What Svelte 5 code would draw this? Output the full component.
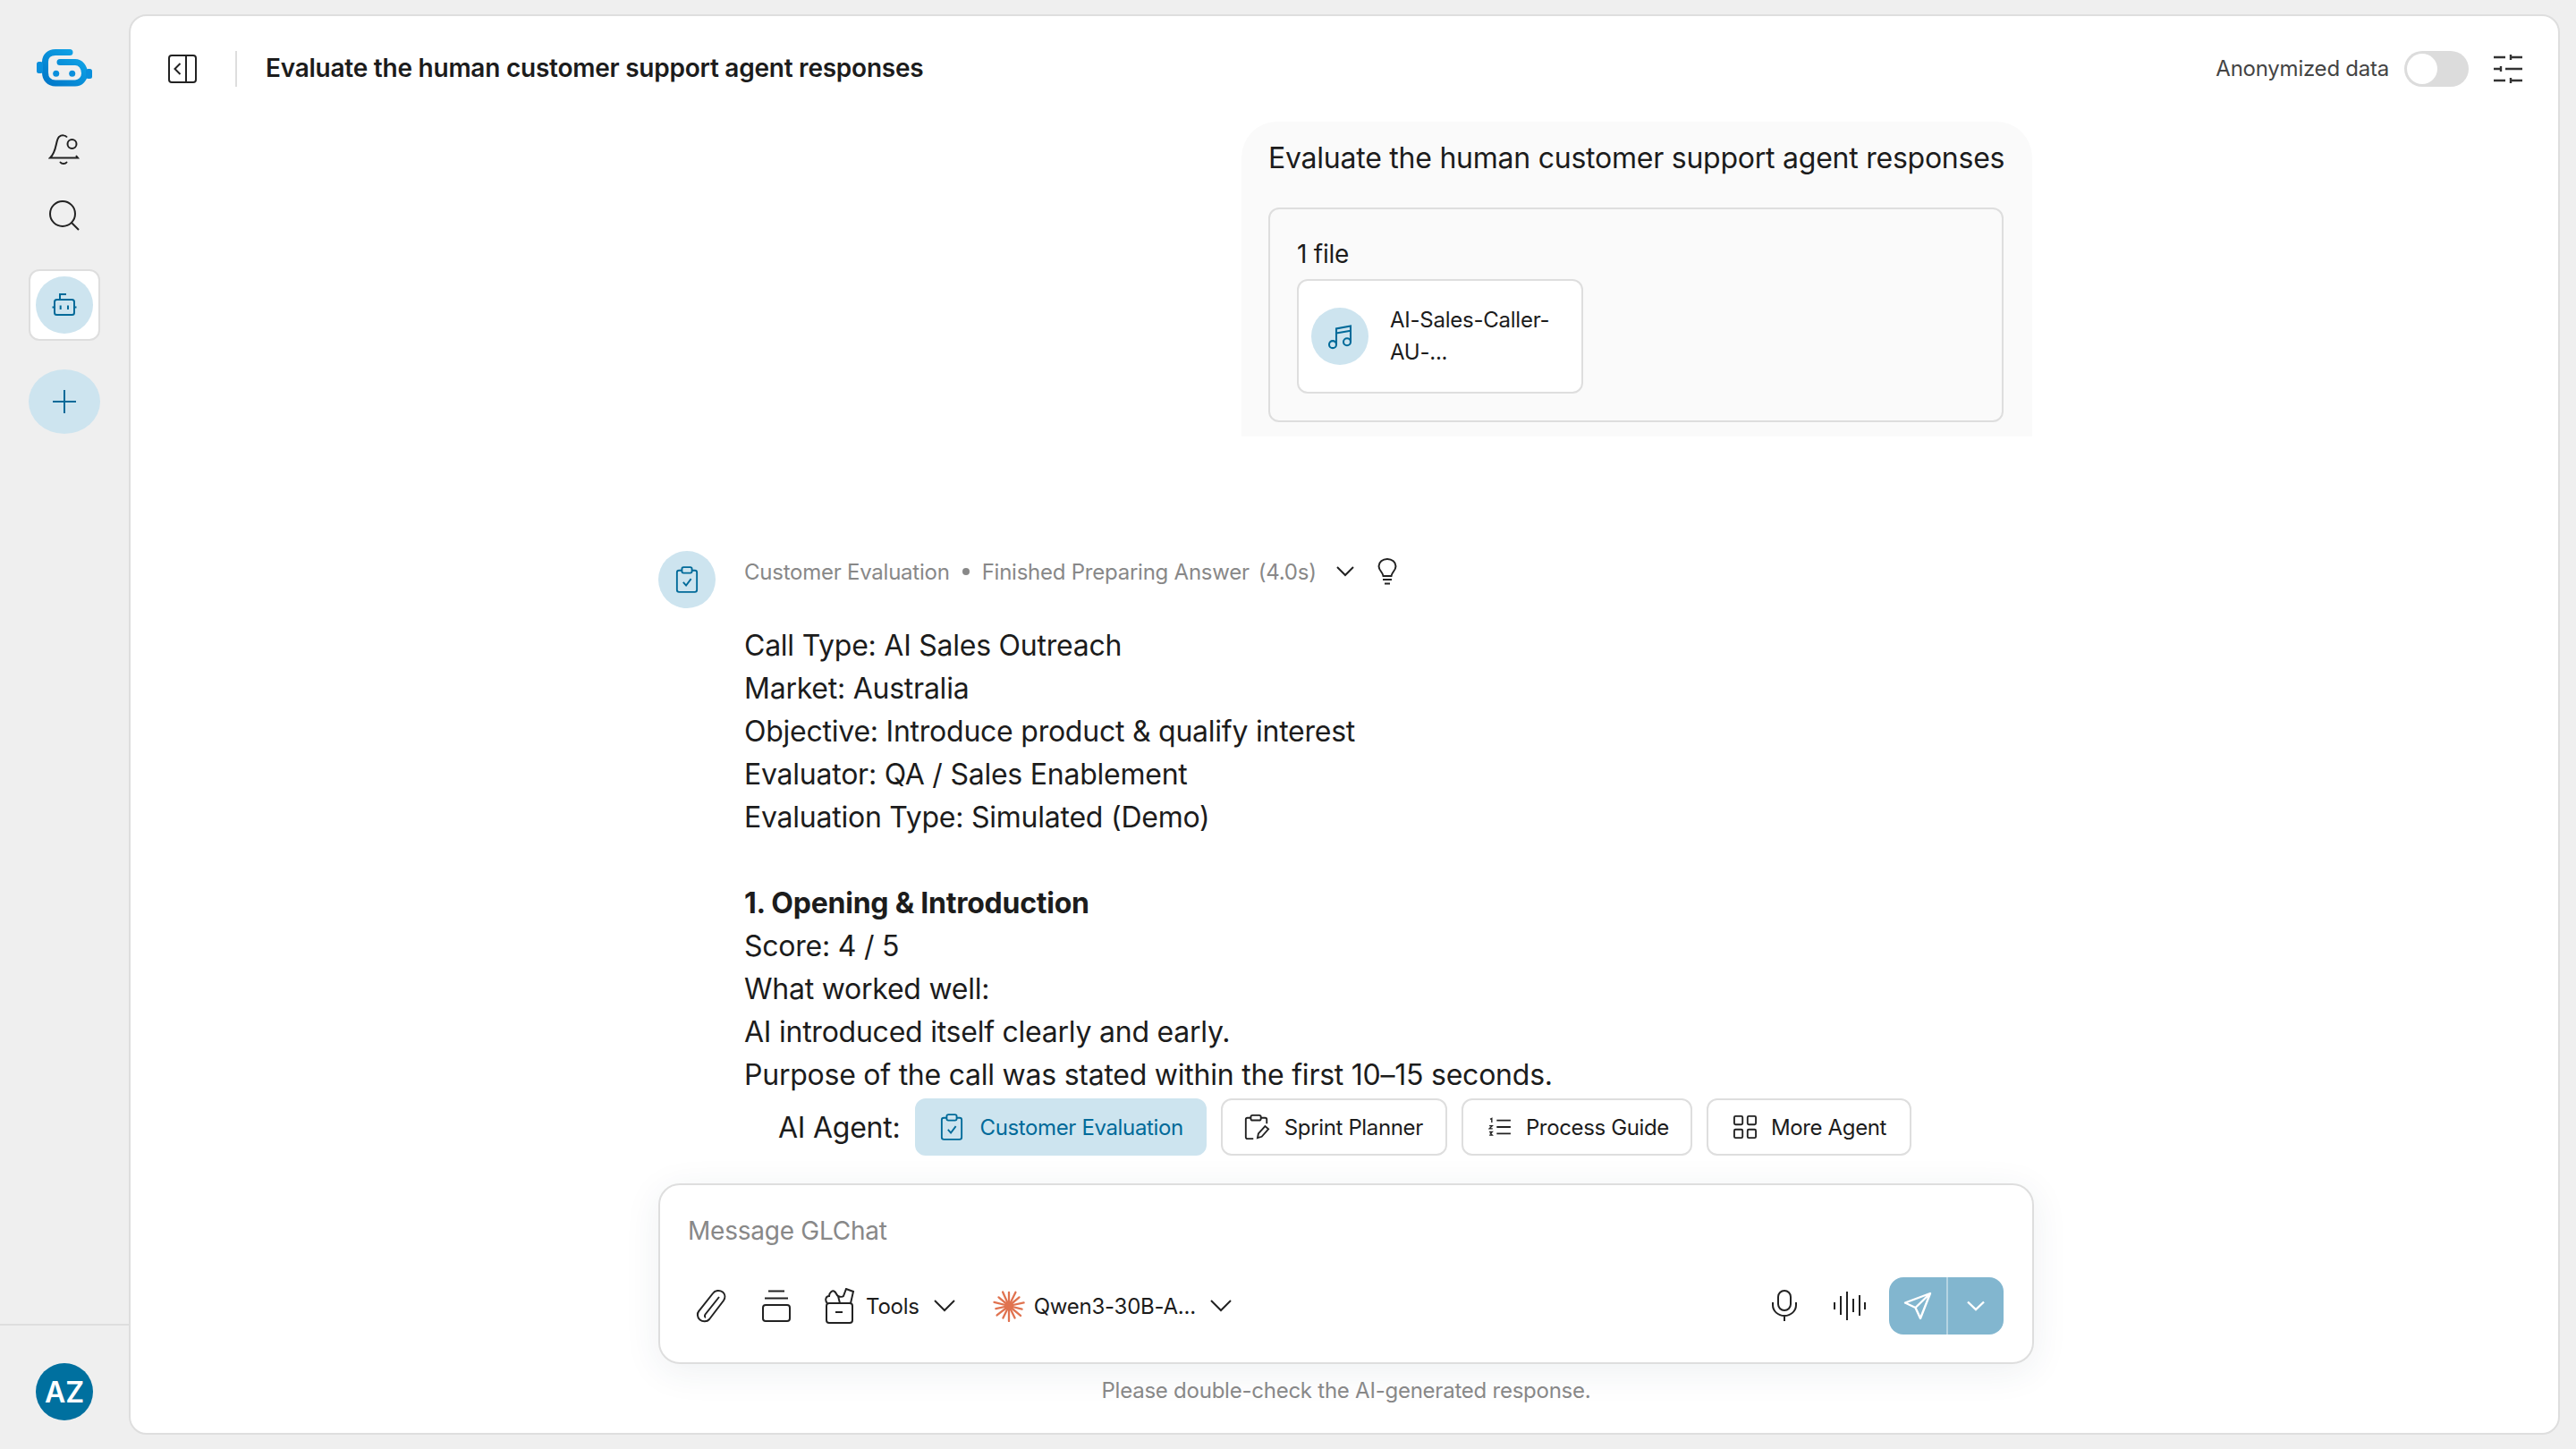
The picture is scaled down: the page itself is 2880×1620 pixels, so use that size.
<script>
  const report = [
    'Call Type: AI Sales Outreach',
    'Market: Australia',
    'Objective: Introduce product & qualify interest',
    'Evaluator: QA / Sales Enablement',
    'Evaluation Type: Simulated (Demo)'
  ];
  const section = [
    'Score: 4 / 5',
    'What worked well:',
    'AI introduced itself clearly and early.',
    'Purpose of the call was stated within the first 10–15 seconds.'
  ];
  const rays = [0, 26, 50, 78, 104, 130, 154, 180, 206, 232, 258, 284, 310, 336];
</script>

<div class="shell">
  <aside class="rail">
    <div class="rail-top">
      <svg class="logo" viewBox="0 0 64 44" fill="none">
        <defs>
          <linearGradient id="lg" x1="0" y1="1" x2="1" y2="0">
            <stop offset="0" stop-color="#0077c8"/>
            <stop offset="1" stop-color="#12a8ea"/>
          </linearGradient>
        </defs>
        <path d="M37 4.500H21C14 4.500 9.500 9 9.500 15V27C9.500 34 14 39 21 39H43C49 39 53.500 34 53.500 28C53.500 21 49 15.500 43 15.500H26" stroke="url(#lg)" stroke-width="7" stroke-linecap="round"/>
        <rect x="0" y="15" width="7" height="13" rx="2.500" fill="#0a8fdc"/>
        <rect x="55" y="23" width="7" height="11" rx="2.500" fill="#0a8fdc"/>
        <circle cx="21.700" cy="28.300" r="3.500" fill="#0a8fdc"/>
        <circle cx="39.700" cy="28.300" r="3.500" fill="#0a8fdc"/>
      </svg>
      <svg class="ic36 bell" viewBox="0 0 36 36" fill="none" stroke="#222" stroke-width="2">
        <path d="M21 4.500C19 2 15 1.500 12 4C8 7.500 10 20 2 27.500H33L31 25"/>
        <circle cx="26.500" cy="12" r="5"/>
        <path d="M13.500 32.500C15 34.500 19 34.500 20.500 32.500" stroke-linecap="round"/>
      </svg>
      <svg class="ic36 search" viewBox="0 0 36 36" fill="none" stroke="#222" stroke-width="2">
        <circle cx="16" cy="16" r="14"/>
        <path d="M26 26L34 34"/>
      </svg>
      <div class="agent-tile">
        <div class="agent-dot">
          <svg viewBox="0 0 32 32" width="32" height="32" fill="none" stroke="#006a99" stroke-width="2">
            <rect x="5" y="10" width="22" height="17" rx="2.500"/>
            <path d="M11 10V4H18M2.500 18.500H5M27 18.500H29.500M11.700 16.500V21M20 16.500V21"/>
          </svg>
        </div>
      </div>
      <div class="plus">
        <svg viewBox="0 0 28 28" width="28" height="28" fill="none" stroke="#006a99" stroke-width="2"><path d="M14 1V27M1 14H27"/></svg>
      </div>
    </div>
    <div class="rail-bottom">
      <div class="avatar">AZ</div>
    </div>
  </aside>

  <main class="panel">
    <header class="top">
      <svg class="ic32" viewBox="0 0 32 32" fill="none" stroke="#222" stroke-width="2">
        <rect x="1" y="1" width="30" height="30" rx="3"/>
        <path d="M20 1V31M13.500 10L7.500 16L13.500 22"/>
      </svg>
      <div class="vr"></div>
      <h1>Evaluate the human customer support agent responses</h1>
      <div class="top-right">
        <span class="anon">Anonymized data</span>
        <div class="toggle"><span></span></div>
        <svg class="ic32" viewBox="0 0 32 32" fill="none" stroke="#333" stroke-width="2.400">
          <path d="M0 3H13M19 3H32M19 0V6M0 16H8M13 16H32M8 13V19M0 29H13M19 29H32M19 26V32"/>
        </svg>
      </div>
    </header>

    <section class="chat">
      <div class="bubble">
        <div class="bubble-text">Evaluate the human customer support agent responses</div>
        <div class="files">
          <div class="files-count">1 file</div>
          <div class="file">
            <div class="file-ic">
              <svg viewBox="0 0 28 28" width="32" height="32" fill="none" stroke="#006a99" stroke-width="1.800">
                <circle cx="7" cy="22" r="3.500"/><circle cx="21" cy="19.500" r="3.500"/>
                <path d="M10.500 22V6.500L24.500 4V19.500M10.500 11L24.500 8.500"/>
              </svg>
            </div>
            <div class="file-name">AI-Sales-Caller-<br>AU-...</div>
          </div>
        </div>
      </div>

      <article class="answer">
        <div class="answer-ic">
          <svg viewBox="0 0 28 32" width="26" height="30" fill="none" stroke="#006a99" stroke-width="2">
            <rect x="2" y="5" width="24" height="26" rx="2.500"/>
            <rect x="8" y="1" width="12" height="7" rx="2" fill="#cde4ef"/>
            <path d="M9.500 19L13 23L19 15"/>
          </svg>
        </div>
        <div class="answer-body">
          <div class="status">
            <span>Customer Evaluation</span><i></i><span>Finished Preparing Answer</span><span class="secs">(4.0s)</span>
            <svg class="chev" viewBox="0 0 20 12" fill="none" stroke="#222" stroke-width="2"><path d="M1 1L10 10L19 1"/></svg>
            <svg class="bulb" viewBox="0 0 22 30" fill="none" stroke="#222" stroke-width="2">
              <path d="M6.500 20C6 15.500 1.500 14 1.500 9A9.500 8 0 0 1 20.500 9C20.500 14 16 15.500 15.500 20Z"/>
              <path d="M6 24H16M8 28.500H14"/>
            </svg>
          </div>
          <div class="prose">
            {#each report as line}<div>{line}</div>{/each}
            <div class="gap"></div>
            <div class="strong">1. Opening &amp; Introduction</div>
            {#each section as line}<div>{line}</div>{/each}
          </div>
        </div>
      </article>
    </section>

    <div class="dock">
      <div class="agents">
        <span class="agents-label">AI Agent:</span>
        <button class="chip on">
          <svg viewBox="0 0 28 32" width="26" height="30" fill="none" stroke="#006a99" stroke-width="2">
            <rect x="2" y="5" width="24" height="26" rx="2.500"/>
            <rect x="8" y="1" width="12" height="7" rx="2" fill="#cde4ef"/>
            <path d="M9.500 19L13 23L19 15"/>
          </svg>
          Customer Evaluation
        </button>
        <button class="chip sprint">
          <svg viewBox="0 0 32 32" width="30" height="30" fill="none" stroke="#222" stroke-width="2">
            <path d="M21 5H26C27.500 5 28 6 28 7V12M9 5H5C3.500 5 3 6 3 7V28C3 29.500 4 30 5 30H12"/>
            <rect x="9" y="2" width="12" height="6" rx="2"/>
            <path d="M17 29L18 24L26 15L30 18.500L22 27.500Z"/>
          </svg>
          Sprint Planner
        </button>
        <button class="chip guide">
          <svg viewBox="0 0 28 24" width="26" height="22" fill="none" stroke="#222" stroke-width="2">
            <path d="M10 4H27M10 12H27M10 20H27"/>
            <path d="M2 2.500L4 1.500V6.500M1 10.500H4.500L1 14H5M1 18H4.500L2.500 20L4.500 22H1" stroke-width="1.500"/>
          </svg>
          Process Guide
        </button>
        <button class="chip">
          <svg viewBox="0 0 28 28" width="26" height="26" fill="none" stroke="#222" stroke-width="2">
            <rect x="1" y="1" width="10" height="10" rx="1.500"/><rect x="17" y="1" width="10" height="10" rx="1.500"/>
            <rect x="1" y="17" width="10" height="10" rx="1.500"/><rect x="17" y="17" width="10" height="10" rx="1.500"/>
          </svg>
          More Agent
        </button>
      </div>

      <div class="composer">
        <div class="placeholder">Message GLChat</div>
        <div class="tools">
          <svg class="clip" viewBox="0 0 36 38" fill="none" stroke="#222" stroke-width="2">
            <path d="M30 3.500C33 6 33 10 31 13L15 34C12.500 37 7.500 37 4.500 34.500C1.500 32 1 27.500 3.500 24.500L19 5C21.500 1.500 26.500 1 30 3.500ZM26 9L10.500 28.500C9.500 30 10 31.500 11 32"/>
          </svg>
          <svg class="stack" viewBox="0 0 32 36" fill="none" stroke="#222" stroke-width="2">
            <path d="M7 1.500H25M3 9.500H29"/>
            <rect x="1" y="17" width="30" height="18" rx="3"/>
          </svg>
          <svg class="box" viewBox="0 0 34 40" fill="none" stroke="#222" stroke-width="2">
            <rect x="2" y="17" width="29" height="22" rx="3"/>
            <path d="M12 27H20"/>
            <path d="M3 17C0 14 1 9 5 9C5 5 9 2 11 4C13 5 13 8 15 9C17 10 20 10 21 9L24 1L32 4L29 17M15 9L17 17"/>
          </svg>
          <span class="t-label tools-label">Tools</span>
          <svg class="chev c1" viewBox="0 0 24 14" fill="none" stroke="#222" stroke-width="2"><path d="M1 1L12 12L23 1"/></svg>
          <svg class="star" viewBox="-18 -18 36 36">
            {#each rays as r, i}
              <line x1="0" y1="0" x2="0" y2={i % 2 ? -17 : -15} stroke="#e07350" stroke-width="2.300" stroke-linecap="round" transform="rotate({r})"/>
            {/each}
            <circle r="5" fill="#e07350"/>
          </svg>
          <span class="t-label">Qwen3-30B-A...</span>
          <svg class="chev c2" viewBox="0 0 24 14" fill="none" stroke="#222" stroke-width="2"><path d="M1 1L12 12L23 1"/></svg>

          <div class="spacer"></div>

          <svg class="mic" viewBox="0 0 28 36" fill="none" stroke="#222" stroke-width="2">
            <rect x="7" y="1" width="14" height="22" rx="7"/>
            <path d="M1 14V17C1 24 7 29 14 29C21 29 27 24 27 17V14M14 29V35"/>
          </svg>
          <svg class="wave" viewBox="0 0 36 32" fill="none" stroke="#222" stroke-width="2">
            <path d="M1 12V20M8 5V26M15 0V32M22 8V23M29 4V27M35 12V20"/>
          </svg>
          <div class="send">
            <div class="send-main">
              <svg viewBox="0 0 32 32" width="32" height="32" fill="none" stroke="#fff" stroke-width="2.400" stroke-linejoin="round">
                <path d="M30 2L2 12.500L13.500 18L19 30ZM30 2L13.500 18"/>
              </svg>
            </div>
            <div class="send-more">
              <svg viewBox="0 0 20 12" width="20" height="12" fill="none" stroke="#fff" stroke-width="2.400"><path d="M1 1.500L10 10L19 1.500"/></svg>
            </div>
          </div>
        </div>
      </div>

      <div class="note">Please double-check the AI-generated response.</div>
    </div>
  </main>
</div>

<style>
  :global(body) { margin: 0; background: #efefef; font-family: Inter, "Liberation Sans", sans-serif; }

  .shell { width: 2880px; height: 1620px; display: flex; background: #efefef; color: #1c1c1c; overflow: hidden; letter-spacing: -0.015em; }

  .rail { width: 144px; flex: none; display: flex; flex-direction: column; justify-content: space-between; }
  .rail-top { display: flex; flex-direction: column; align-items: center; padding-top: 54px; }
  .logo { width: 64px; height: 44px; margin-left: 2px; }
  .ic36 { width: 36px; height: 36px; }
  .bell { margin-top: 51px; }
  .search { margin-top: 38px; }
  .agent-tile {
    width: 80px; height: 80px; box-sizing: border-box; margin-top: 42px;
    background: #fff; border: 2px solid #dedede; border-radius: 12px;
    display: flex; align-items: center; justify-content: center;
  }
  .agent-dot, .file-ic, .answer-ic {
    border-radius: 50%; background: #cde4ef; flex: none;
    display: flex; align-items: center; justify-content: center;
  }
  .agent-dot { width: 64px; height: 64px; }
  .plus {
    width: 80px; height: 72px; margin-top: 32px; border-radius: 50%;
    background: #cde4ef; display: flex; align-items: center; justify-content: center;
  }
  .rail-bottom { height: 140px; box-sizing: border-box; border-top: 2px solid #dedede; display: flex; justify-content: center; padding-top: 42px; }
  .avatar {
    width: 64px; height: 64px; border-radius: 50%; background: #00709f; color: #fff;
    font-size: 32px; font-weight: 600; letter-spacing: 0; display: flex; align-items: center; justify-content: center;
  }

  .panel {
    width: 2718px; height: 1588px; margin-top: 16px; box-sizing: border-box;
    background: #fff; border: 2px solid #dedede; border-radius: 20px;
    display: flex; flex-direction: column; overflow: hidden;
  }

  .top { height: 118px; flex: none; box-sizing: border-box; padding: 0 40px 0 42px; display: flex; align-items: center; }
  .ic32 { width: 32px; height: 32px; flex: none; }
  .vr { width: 2px; height: 40px; background: #dedede; margin: 0 32px 0 43px; }
  h1 { margin: 0 0 2px; font-size: 28px; font-weight: 600; line-height: 40px; color: #1c1c1c; }
  .top-right { margin-left: auto; display: flex; align-items: center; }
  .anon { font-size: 24px; color: #444; margin-bottom: 2px; }
  .toggle {
    width: 72px; height: 40px; border-radius: 20px; background: #dcdcdc; margin: 0 28px 0 17px;
    box-sizing: border-box; padding: 3px;
  }
  .toggle span { display: block; width: 34px; height: 34px; border-radius: 50%; background: #fff; }

  .chat { flex: 1; min-height: 0; overflow: hidden; width: 1536px; margin-left: 590px; display: flex; flex-direction: column; }
  .bubble {
    align-self: flex-end; width: 884px; box-sizing: border-box; background: #fafafa;
    border-radius: 40px 40px 0 0; padding: 17px 32px 16px 30px; flex: none;
  }
  .bubble-text { font-size: 32px; line-height: 48px; white-space: nowrap; }
  .files { margin-top: 31px; height: 240px; box-sizing: border-box; border: 2px solid #dedede; border-radius: 12px; padding: 30px 30px 0; }
  .files-count { font-size: 28px; line-height: 40px; }
  .file {
    width: 320px; height: 128px; box-sizing: border-box; margin-top: 8px; background: #fff;
    border: 2px solid #dedede; border-radius: 12px; padding: 0 14px; display: flex; align-items: center; gap: 24px;
  }
  .file-ic { width: 64px; height: 64px; }
  .file-name { font-size: 24px; line-height: 36px; }

  .answer { display: flex; gap: 32px; margin-top: 128px; flex: none; }
  .answer-ic { width: 64px; height: 64px; }
  .status { display: flex; align-items: center; height: 46px; font-size: 24px; color: #888; }
  .status i { width: 8px; height: 8px; border-radius: 50%; background: #888; margin: 0 14px; }
  .secs { margin-left: 10px; }
  .status .chev { width: 20px; height: 12px; margin-left: 22px; }
  .bulb { width: 22px; height: 30px; margin-left: 26px; }
  .prose { font-size: 32px; line-height: 48px; margin-top: 36px; color: #1c1c1c; }
  .gap { height: 48px; }
  .strong { font-weight: 700; }

  .dock { flex: none; display: flex; flex-direction: column; align-items: center; padding-left: 4px; }
  .agents { width: 1538px; display: flex; align-items: center; gap: 16px; height: 64px; padding-left: 134px; box-sizing: border-box; }
  .agents-label { font-size: 32px; margin-right: 1px; }
  .chip {
    height: 64px; box-sizing: border-box; padding: 0 26px 0 28px; background: #fff; border: 2px solid #dedede;
    border-radius: 12px; display: flex; align-items: center; gap: 16px; font: 24px Inter, sans-serif; letter-spacing: -0.015em; color: #1c1c1c;
  }
  .chip.on { background: #cde4ef; border-color: #cde4ef; color: #006a99; gap: 18px; padding: 0 24px 0 26px; }
  .chip.sprint { padding: 0 25px 0 23px; }
  .chip.guide { padding-right: 24px; }

  .composer {
    width: 1538px; height: 202px; box-sizing: border-box; margin-top: 31px; background: #fff;
    border: 2px solid #dedede; border-radius: 24px; padding: 0 32px 0 31px;
    box-shadow: 0 8px 40px rgba(40, 60, 90, .08);
  }
  .placeholder { font-size: 28px; line-height: 40px; color: #888; margin-top: 31px; }
  .tools { display: flex; align-items: center; height: 64px; margin-top: 32px; }
  .clip { width: 36px; height: 38px; margin-left: 9px; }
  .stack { width: 32px; height: 36px; margin-left: 38px; }
  .box { width: 34px; height: 40px; margin-left: 38px; }
  .t-label { font-size: 24px; margin-left: 10px; }
  .tools-label { margin-left: 12px; }
  .chev { flex: none; }
  .c1 { width: 24px; height: 14px; margin-left: 16px; }
  .star { width: 36px; height: 36px; margin-left: 42px; }
  .c2 { width: 24px; height: 14px; margin-left: 16px; }
  .spacer { flex: 1; }
  .mic { width: 28px; height: 36px; }
  .wave { width: 36px; height: 32px; margin-left: 41px; }
  .send { width: 128px; height: 64px; margin-left: 26px; background: #82b6cf; border-radius: 16px; display: flex; }
  .send-main { width: 64px; display: flex; align-items: center; justify-content: center; }
  .send-more { flex: 1; border-left: 2px solid #b5d4e3; display: flex; align-items: center; justify-content: center; }

  .note { font-size: 24px; line-height: 34px; color: #888; margin: 13px 0 30px; }
</style>
